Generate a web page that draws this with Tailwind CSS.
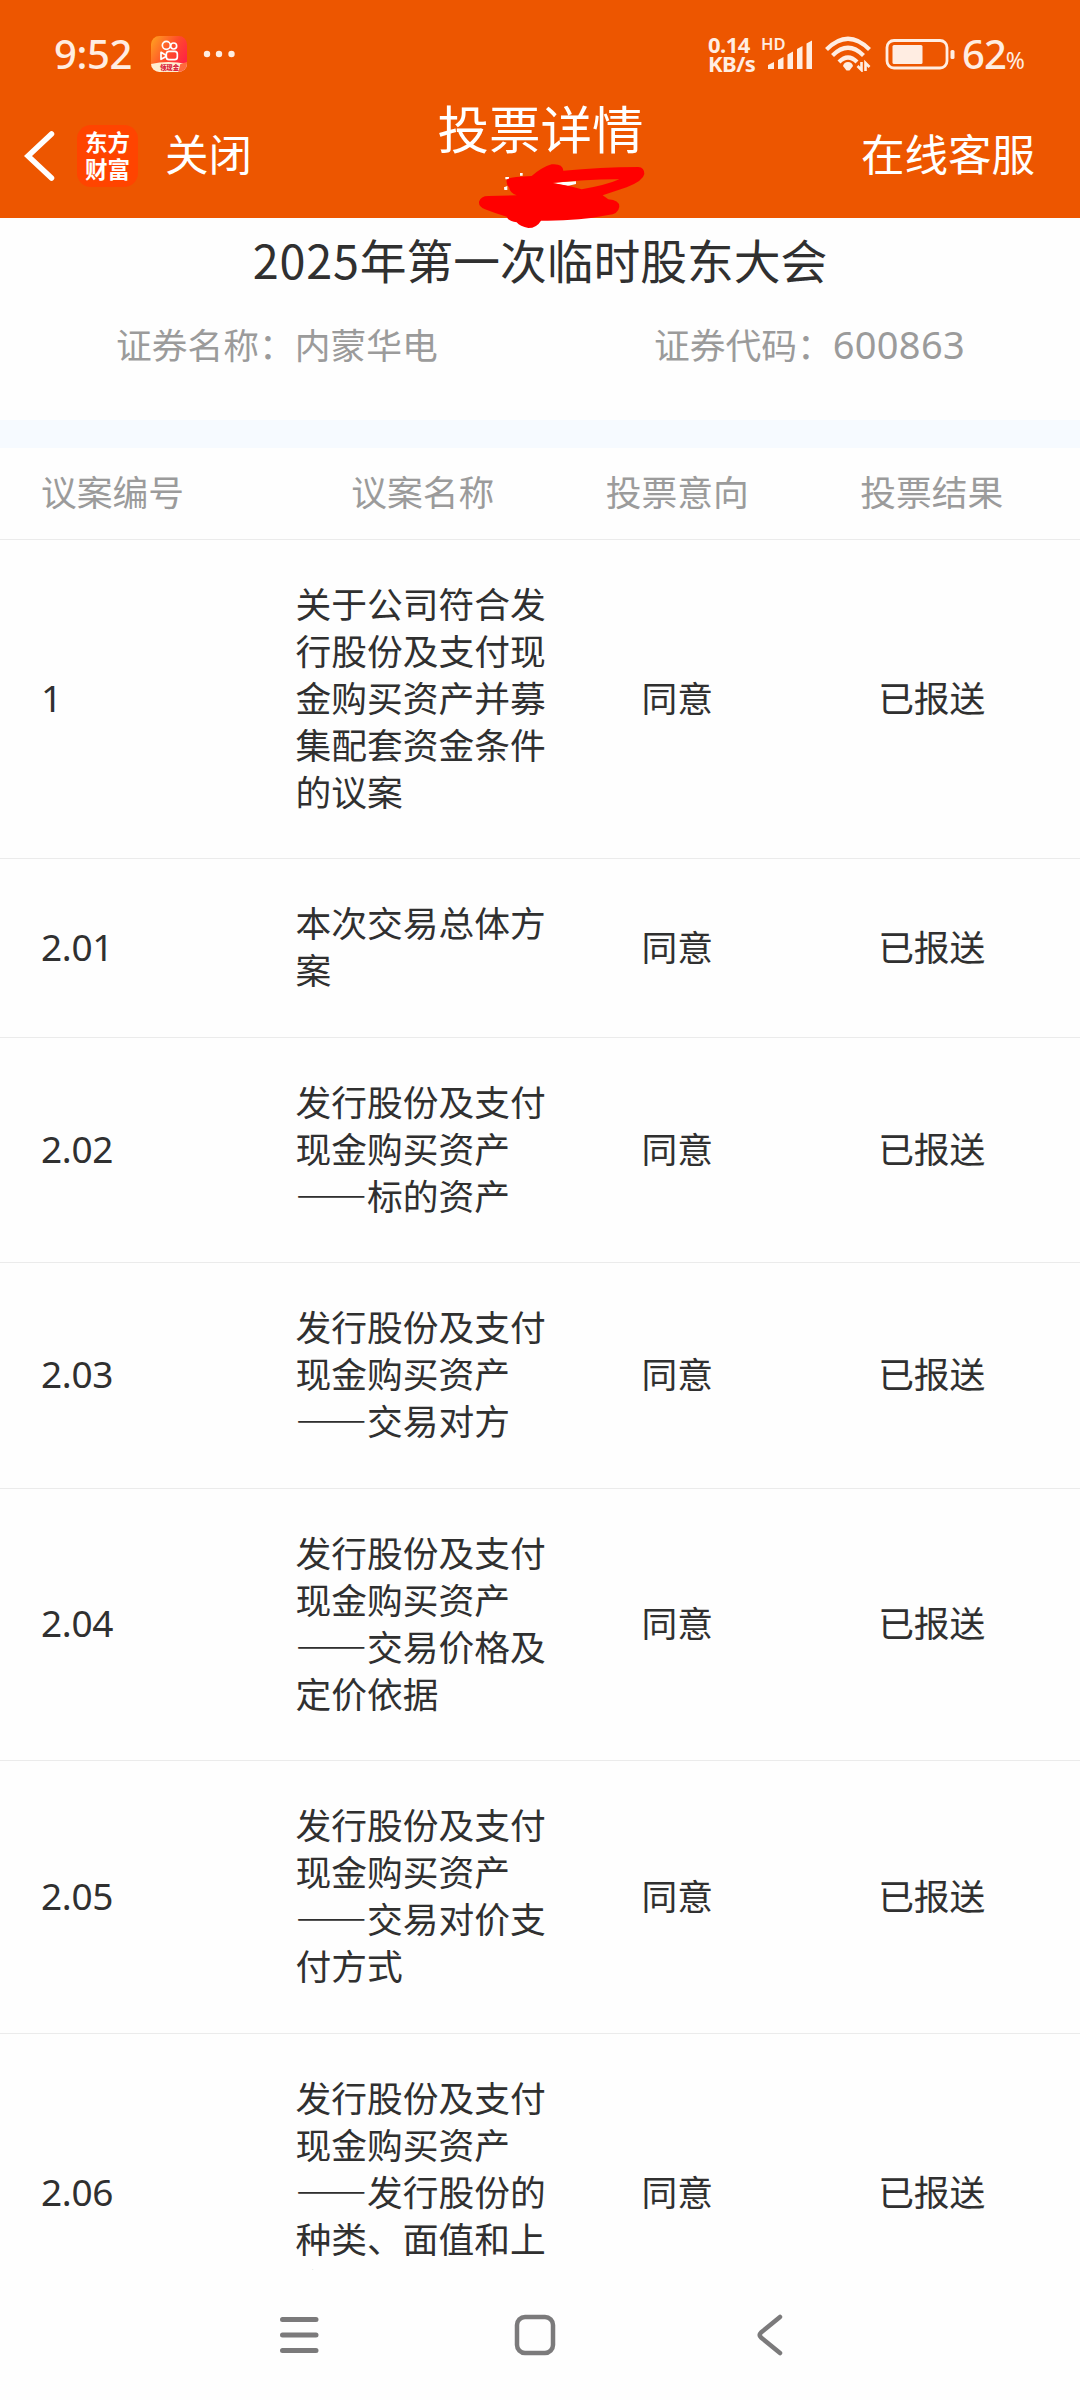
<!doctype html>
<html lang="zh-CN">
<head>
    <meta charset="UTF-8">
    <title>投票详情</title>
    <script src="https://cdn.jsdelivr.net/npm/@tailwindcss/browser@4"></script>
</head>
<body class="bg-white">
<div class="relative flex flex-col w-[1080px] h-[2400px] overflow-hidden bg-[#fefefe] text-[#303030] font-['Noto_Sans_CJK_SC',sans-serif]">

    <header class="shrink-0 h-[218px] bg-[#ed5600] text-white">
        <!-- status bar -->
        <div class="flex items-center h-[108px] pl-[54px] pr-[54px] text-[#ffede2]">
            <span class="w-[78px] font-['Noto_Sans',sans-serif] font-medium text-[40px] leading-none tracking-[-0.4px]">9:52</span>
            <svg class="ml-[19px] w-9 h-9" viewBox="0 0 108 108">
                <defs>
                    <linearGradient id="app" x1="0" y1="0" x2="1" y2="0.6">
                        <stop offset="0" stop-color="#ffa51f"/>
                        <stop offset="0.6" stop-color="#ff4a2c"/>
                        <stop offset="1" stop-color="#ff2444"/>
                    </linearGradient>
                    <clipPath id="round"><rect width="108" height="108" rx="25"/></clipPath>
                </defs>
                <g clip-path="url(#round)">
                    <rect width="108" height="108" fill="url(#app)"/>
                    <path d="M0 84Q50 72 108 84V108H0Z" fill="#ffefd0"/>
                    <path d="M88 84L108 78V108H82Z" fill="#ff6a3c"/>
                    <text x="27" y="102" font-size="19" font-weight="900" fill="#d8203c">领现金</text>
                </g>
                <g fill="none" stroke="#fff" stroke-width="5">
                    <circle cx="46" cy="28" r="12"/>
                    <circle cx="68" cy="30" r="9"/>
                    <rect x="46" y="46" width="33" height="25" rx="8"/>
                    <path d="M30 49L44 57V62L30 70Z" stroke-linejoin="round"/>
                </g>
            </svg>
            <svg class="ml-4 w-8 h-2" viewBox="0 0 32 8" fill="currentColor">
                <circle cx="4" cy="4" r="3.2"/><circle cx="16" cy="4" r="3.2"/><circle cx="28.500" cy="4" r="3.2"/>
            </svg>

            <div class="ml-auto flex items-center h-9">
                <div class="w-[50px] font-['Noto_Sans',sans-serif] font-bold text-[22px] leading-[19px] tracking-[-0.5px]">
                    <div>0.14</div>
                    <div>KB/s</div>
                </div>
                <svg class="ml-1 w-[52px] h-9 overflow-visible" viewBox="0 0 52 36" fill="currentColor">
                    <text x="-1" y="14" font-size="16.500" font-weight="600" font-family="Noto Sans">HD</text>
                    <path d="M6 29L12 26V33H6ZM16 24L21.500 21V33H16ZM25.500 18.500L31 15.500V33H25.500ZM35 13L40.500 10V33H35ZM44.500 7.500L50 4.500V33H44.500Z"/>
                </svg>
                <svg class="ml-[11px] w-12 h-9" viewBox="0 0 48 36" fill="none" stroke="currentColor" stroke-width="4.200">
                    <path d="M1.500 13.500Q23 -8 44.500 13.500"/>
                    <path d="M7.500 19.500Q23 4 38.500 19.500"/>
                    <path d="M14 26Q23 17 32 26"/>
                    <path d="M23 26Q27 26 28 30L24.500 34.500H21.500L18 30Q19 26 23 26Z" fill="currentColor" stroke="none"/>
                    <path d="M36.500 26V34L32.500 30M40.500 35V27L44.500 31" stroke-width="2.600"/>
                </svg>
                <svg class="ml-3 w-[70px] h-8" viewBox="0 0 70 32" fill="none" stroke="currentColor">
                    <rect x="2" y="2.500" width="60" height="27.500" rx="7" stroke-width="2.800"/>
                    <rect x="7.500" y="7" width="30" height="19" rx="1.500" fill="currentColor" stroke="none"/>
                    <rect x="65.500" y="12" width="4" height="9" rx="1.500" fill="currentColor" stroke="none"/>
                </svg>
                <div class="ml-[7px] w-[64px] flex items-baseline font-['Noto_Sans',sans-serif] leading-none">
                    <span class="text-[40px] tracking-[-1px] font-medium">62</span><span class="text-[23px]">%</span>
                </div>
            </div>
        </div>

        <!-- title bar -->
        <div class="grid grid-cols-3 h-[110px] pl-6 pr-[45px]">
            <div class="flex items-center h-24">
                <svg class="w-8 h-[52px]" viewBox="0 0 32 52" fill="none" stroke="currentColor" stroke-width="5.500" stroke-linecap="round">
                    <path d="M27.500 4L4 26L27.500 48"/>
                </svg>
                <div class="ml-[21px] pb-0.5 flex flex-col items-center justify-center w-[61px] h-[62px] rounded-[14px] bg-[#ff4400] text-[22.500px] leading-[27px] font-bold">
                    <span>东方</span>
                    <span>财富</span>
                </div>
                <span class="ml-[27px] pb-[7px] text-[43.500px] leading-none">关闭</span>
            </div>
            <div class="-mt-[9px] pl-[22px] text-center text-[51.500px] leading-[56px] whitespace-nowrap">投票详情</div>
            <div class="flex items-center justify-end h-24 pb-[7px] text-[43.500px] leading-none">在线客服</div>
        </div>
    </header>

    <!-- hand drawn marker over the subtitle -->
    <svg class="absolute left-[360px] top-[80px] w-[360px] h-[150px]" viewBox="0 0 1080 450">
        <path d="M436 291H447V298H436ZM480 279H488V287H480ZM432 322L442 318V330H433ZM574 308L648 304V312L622 318Z" fill="#fff"/>
        <path fill="#ff0000" fill-rule="evenodd" d="M440 300Q445 290 515 288Q545 262 575 253Q608 250 610 272Q720 262 835 261Q853 262 853 282Q850 302 800 322L728 346L745 358Q778 360 778 380Q775 402 745 405Q650 424 543 422Q530 444 505 444Q480 440 470 427Q445 424 440 410Q410 402 375 388Q355 380 357 365Q362 348 385 348L470 346Q450 340 447 322Q438 312 440 300ZM578 309Q690 297 778 298Q740 315 665 328Q620 315 578 309Z"/>
    </svg>

    <section class="shrink-0 h-[202px] pt-[13px]">
        <h1 class="text-center text-[46.750px] leading-[56px]"><span class="tracking-[0.8px]">2025</span>年第一次临时股东大会</h1>
        <div class="flex mt-[29px] pl-[116px] text-[35.750px] leading-[56px] text-[#9b9b9b]">
            <div class="w-[538px]">证券名称：内蒙华电</div>
            <div>证券代码：<span class="font-['Noto_Sans',sans-serif] text-[38px] tracking-[0.300px]">600863</span></div>
        </div>
    </section>

    <div class="shrink-0 h-7 bg-[#f6faff]"></div>

    <main class="h-[1822px] shrink-0 overflow-hidden text-[35.750px] leading-[47px]">
        <div class="grid grid-cols-[254.5px_254.5px_254.5px_254.5px] items-center h-[91.500px] pl-[41px] pb-[5px] border-b border-[#ebebeb] text-center text-[#9b9b9b]">
            <div class="text-left">议案编号</div>
            <div>议案名称</div>
            <div>投票意向</div>
            <div>投票结果</div>
        </div>
        <div id="rows"></div>
    </main>

    <!-- system navigation -->
    <nav class="grow flex items-center justify-between pl-[279px] pr-[297px] pb-px text-[#7b7a7b]">
        <svg class="w-10 h-10" viewBox="0 0 40 40" stroke="currentColor" stroke-width="5" stroke-linecap="round">
            <path d="M3.500 4.500H37M3.500 20H37M3.500 35.500H37"/>
        </svg>
        <svg class="mr-1.5 w-[42px] h-[42px]" viewBox="0 0 42 42" fill="none" stroke="currentColor" stroke-width="4.500">
            <rect x="3" y="3" width="36" height="36" rx="8"/>
        </svg>
        <svg class="w-[27px] h-[42px]" viewBox="0 0 27 42" fill="none" stroke="currentColor" stroke-width="4.500" stroke-linecap="round" stroke-linejoin="round">
            <path d="M24 3L5 18.500Q2.500 21 5 23.500L24 39"/>
        </svg>
    </nav>
</div>

<script>
    const dash = `<span class="font-bold">——</span>`;

    const proposals = [
        ["1", "关于公司符合发<br>行股份及支付现<br>金购买资产并募<br>集配套资金条件<br>的议案"],
        ["2.01", "本次交易总体方<br>案"],
        ["2.02", `发行股份及支付<br>现金购买资产<br>${dash}标的资产`],
        ["2.03", `发行股份及支付<br>现金购买资产<br>${dash}交易对方`],
        ["2.04", `发行股份及支付<br>现金购买资产<br>${dash}交易价格及<br>定价依据`],
        ["2.05", `发行股份及支付<br>现金购买资产<br>${dash}交易对价支<br>付方式`],
        ["2.06", `发行股份及支付<br>现金购买资产<br>${dash}发行股份的<br>种类、面值和上<br>市地点`],
    ];

    document.getElementById("rows").innerHTML = proposals.map(([no, name]) => `
        <div class="grid grid-cols-[254.5px_254.5px_254.5px_254.5px] items-center pl-[41px] pt-[39px] pb-[44.5px] border-b border-[#ebebeb] text-center">
            <div class="pt-0.5 text-left font-['Noto_Sans',sans-serif] text-[37px] tracking-[-0.3px]">${no}</div>
            <div class="text-left whitespace-nowrap">${name}</div>
            <div>同意</div>
            <div>已报送</div>
        </div>`).join("");
</script>
</body>
</html>
